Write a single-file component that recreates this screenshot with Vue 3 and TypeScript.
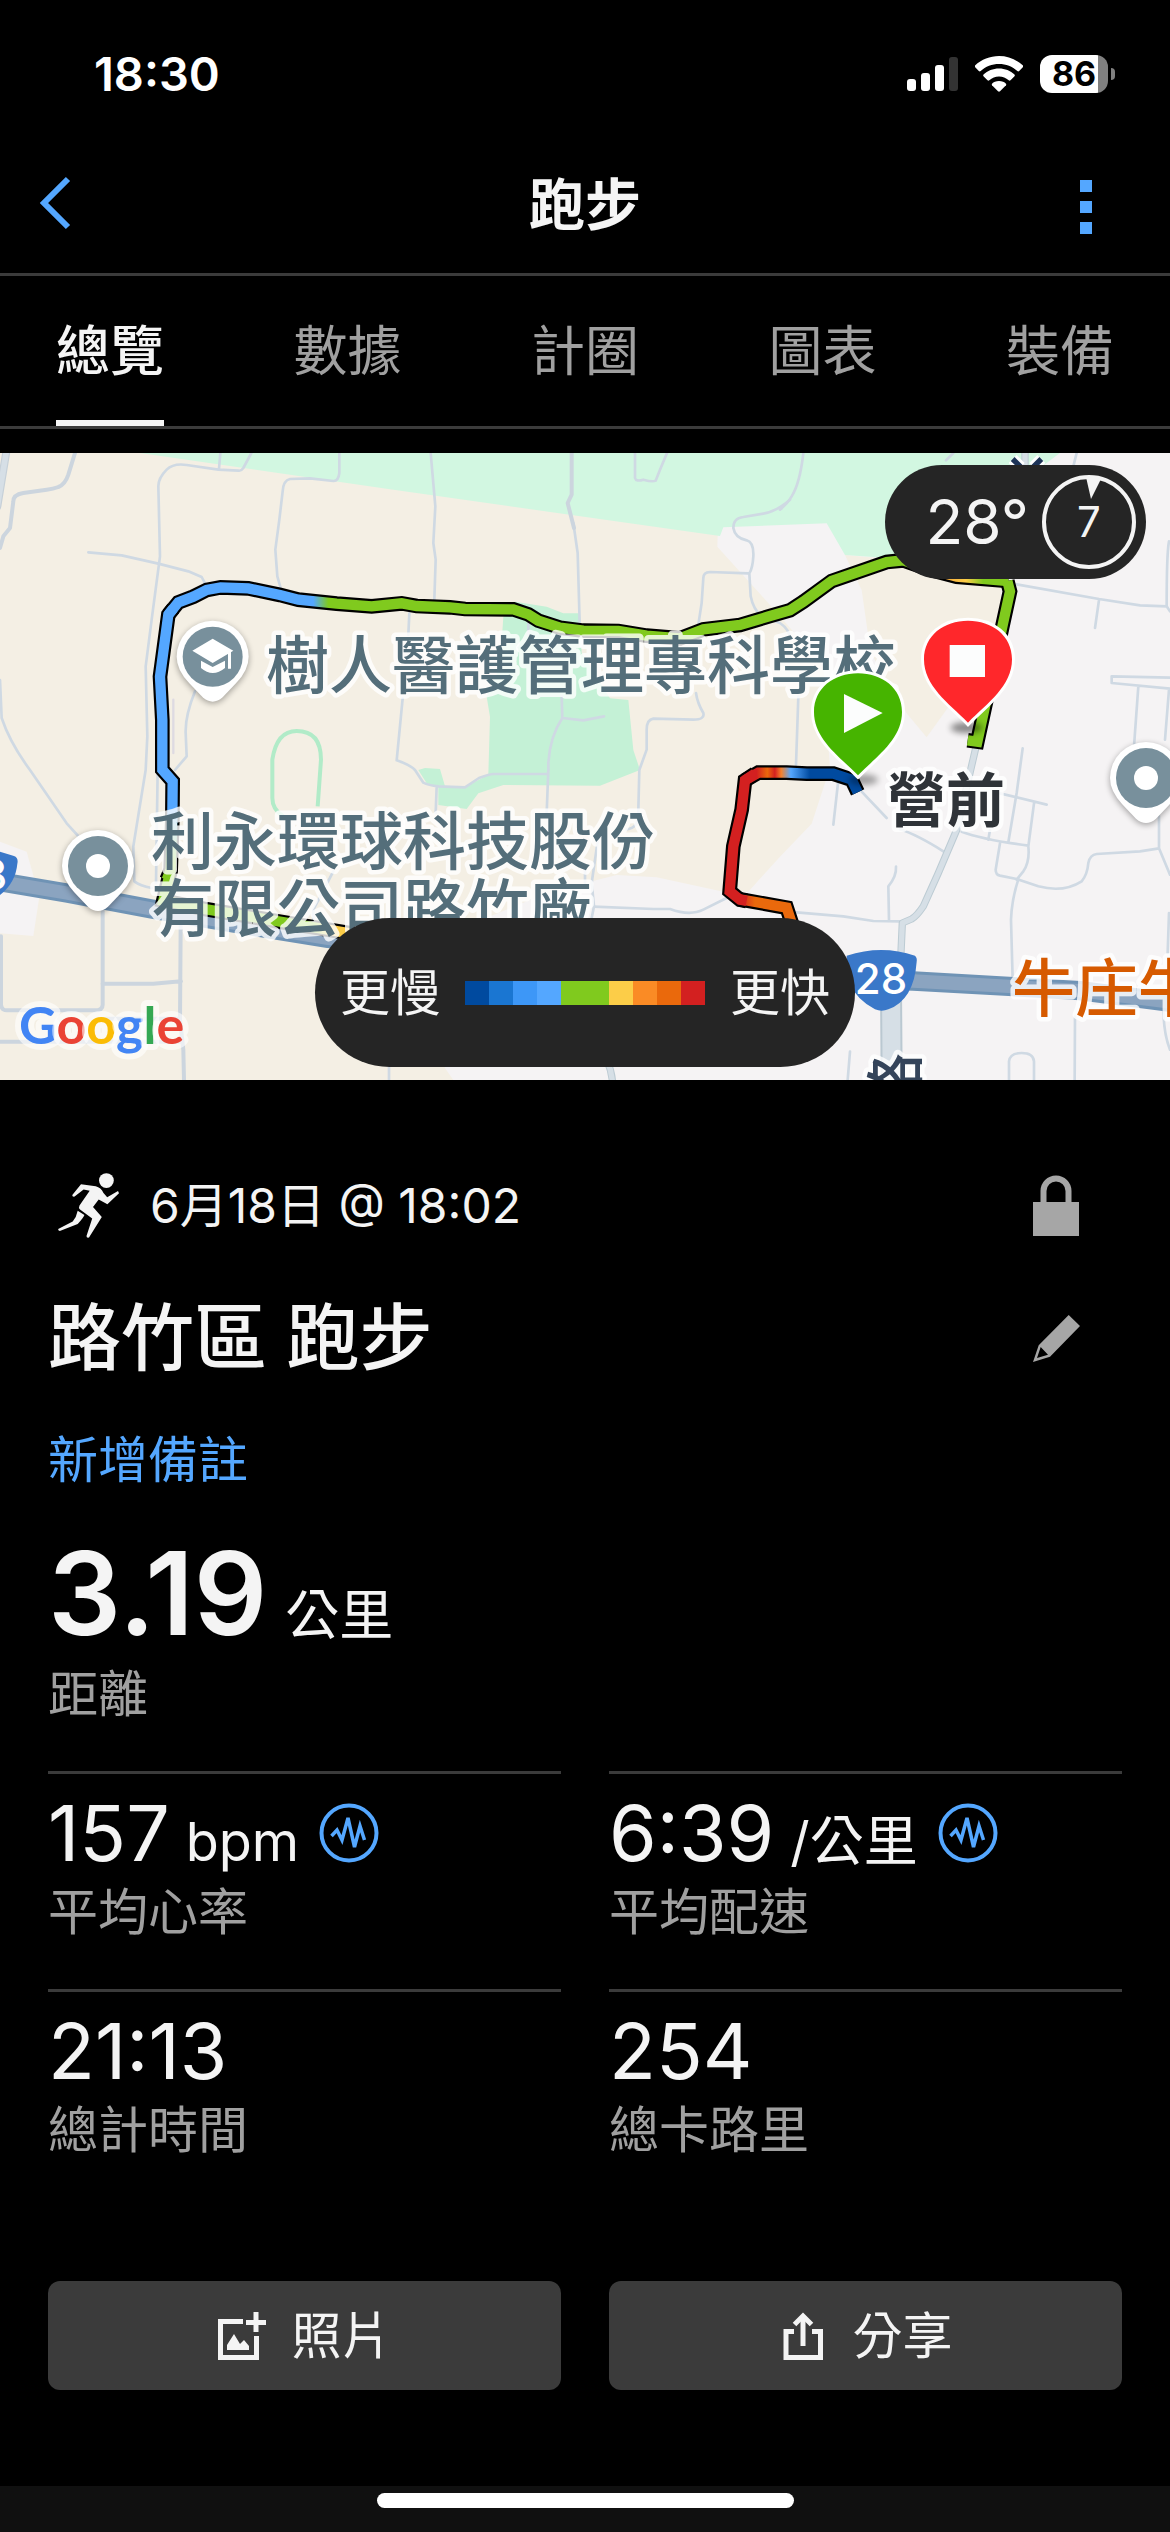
<script setup lang="ts">
import { ref } from 'vue'

interface Stat {
  value: string
  unit?: string
  label: string
  chart?: boolean
}

const tabs: string[] = ['總覽', '數據', '計圈', '圖表', '裝備']
const active = ref<string>('總覽')

const stats: Stat[] = [
  { value: '157', unit: 'bpm', label: '平均心率', chart: true },
  { value: '6:39', unit: '/公里', label: '平均配速', chart: true },
  { value: '21:13', label: '總計時間' },
  { value: '254', label: '總卡路里' },
]

const paceColors: string[] = [
  '#004a9f', '#1a76d2', '#3d97f7', '#54a7ff', '#80ca1e',
  '#80ca1e', '#fccd48', '#fa8b25', '#ea690c', '#d32020',
]

// Minor roads, in thirds of a map pixel
const roads: string[] = [
  'M0 681L5 795Q30 870 90 951L200 1111L240 1155',
  'M265 298L365 307L475 332L565 355L605 372L617 395',
  'M754 0L730 45Q723 55 715 53L655 50L560 36Q520 30 500 50Q475 75 475 100L480 310L455 500L437 640L442 850L437 951L400 1180L403 1285Q420 1298 455 1305',
  'M661 0L657 48',
  'M1018 0V60Q1015 85 1000 84L930 76L870 78Q850 82 848 115L838 200L826 290L832 370L842 405',
  'M585 715Q555 790 557 840L560 910L525 951M473 951L468 1290',
  'M1228 481L1225 545M1208 736L1190 922Q1230 935 1245 951L1270 989Q1285 997 1315 1000L1395 1003L1437 975Q1470 963 1480 963L1642 963M1310 1001L1307 1080',
  'M1292 0L1306 160L1300 270L1307 320L1303 440',
  'M1720 210L1733 300L1739 510',
  'M1645 951L1640 1080',
  'M1905 0V75Q1908 87 1930 80Q1958 88 1967 83L1980 50L2001 0',
  'M2370 140Q2330 175 2290 182L2230 192Q2200 195 2200 225Q2205 255 2240 262Q2262 268 2260 310Q2258 345 2248 361L2252 430Q2260 470 2285 490L2340 510Q2370 530 2370 560M2395 731L2388 935',
  'M2245 361L2130 357Q2110 358 2110 375L2105 450L2095 515',
  'M1585 511V545M1685 731L1687 795Q1650 850 1645 930V951M1687 795L1750 802L1812 790',
  'M2088 720Q2092 750 2110 780Q2115 800 2080 800L1960 797Q1940 800 1940 830V890L1918 951L1915 1070Q1920 1125 1880 1129',
  'M2410 0Q2400 90 2375 130Q2360 155 2340 170',
  'M2860 0L2838 22M3230 0L3220 40',
  'M3050 394L3297 438L3420 457L3500 460L3510 475M3297 441L3285 525M3507 265Q3500 300 3500 460',
  'M3510 674L3335 670V690L3510 707M3415 700L3402 880M3507 710L3495 860',
  'M3068 886L3050 1020L3025 1168',
  'M2515 981L2500 1115M2585 1016L2660 1095M2700 1129Q2750 1145 2830 1195',
  'M2885 1136Q2950 1160 3085 1178M3000 1021L3140 1055M3102 1051L3085 1180Q3090 1225 3070 1255L3050 1280',
  'M3000 1171L2987 1250Q2987 1265 3000 1268L3050 1278L3115 1300Q3190 1320 3245 1285Q3262 1265 3265 1230Q3270 1205 3290 1203L3420 1195L3477 1186L3510 1265M3477 1186V1090',
  'M3055 1279Q3035 1340 3033 1400L3038 1580M2970 1131L2965 1160',
  'M2688 1241Q2690 1270 2665 1300L2667 1400',
  'M2390 1378L2530 1390L2620 1404L2700 1405',
  'M1780 1361L1960 1368L2010 1368Q2070 1390 2110 1370L2180 1335',
  'M1795 1151L1775 1290L1782 1360L1774 1400M1755 1240V1290',
  'M2550 1796L2543 1881M3027 1881V1825Q3030 1800 3065 1800Q3100 1800 3102 1825V1881M3225 1691L3224 1881M3490 1661Q3490 1740 3510 1790M3507 1380L3503 1500',
  'M1000 1255L940 1370V1400M1167 1840V1881',
]

const wideRoads: string[] = [
  'M225 0L205 65Q195 95 175 102Q160 108 140 110L70 120Q40 125 40 145L30 225L10 250L0 285',
  'M1715 0V125L1703 150L1722 225',
  'M308 1370V1655Q308 1672 285 1672L20 1672Q5 1672 3 1655V1450',
  'M308 1592H460L543 1585M542 1420L540 1700L550 1790L552 1881M0 1766H540M320 1697H540',
]

const trackTop =
  'M505 485L535 448L580 431L620 411L662 403L745 406L840 426L895 440L1010 452L1115 460L1205 451L1250 459L1350 463L1395 468L1540 469L1585 484L1615 503L1680 524L1750 533L1855 534L1940 548L2040 556L2110 529L2220 516L2310 489L2370 472L2410 446L2495 384L2660 327L2710 322L2790 350L2870 371L3025 384'
const trackEnd = 'M3022 384L3030 415L3005 530L2932 866L2903 862'
const trackLeft = 'M500 1280L512 1251L517 1100L518 985L487 950L487 801L480 671L505 485L520 466'
const trackSouth = 'M1100 1450L1050 1441L840 1406L620 1369L490 1343L512 1251'
const trackStart = 'M2573 1018L2555 980L2500 962L2420 962L2360 959L2275 959L2235 982'
const trackFast = 'M2265 962L2235 982L2225 1070L2200 1180L2189 1315L2220 1340L2240 1344'
const trackTail = 'M2215 1338L2360 1364L2385 1440'
const trackAll: string[] = [trackTop, trackEnd, trackLeft, trackSouth, trackStart, trackFast, trackTail]
</script>

<template>
  <div class="screen">
    <div class="status">
      <span class="clock">18:30</span>
      <div class="indicators">
        <svg class="signal" viewBox="0 0 51 36" aria-hidden="true">
          <rect x="0" y="23" width="9" height="12" rx="3" fill="#fff" />
          <rect x="14" y="17" width="9" height="18" rx="3" fill="#fff" />
          <rect x="28" y="9" width="9" height="26" rx="3" fill="#fff" />
          <rect x="42" y="1" width="9" height="34" rx="3" fill="#333" />
        </svg>
        <svg class="wifi" viewBox="0 0 48 36" aria-hidden="true">
          <path fill="#fff" d="M24 0C33 0 41.500 3.500 48 9.500Q48.500 10.500 47.800 11.200L44.200 15Q43.300 15.800 42.300 15C37.500 10.500 31 8 24 8C17 8 10.500 10.500 5.700 15Q4.700 15.800 3.800 15L.2 11.200Q-.5 10.500 0 9.500C6.500 3.500 15 0 24 0Z" />
          <path fill="#fff" d="M24 12.500C30 12.500 35.500 14.800 39.500 18.500Q40.300 19.500 39.500 20.300L35.500 24.300Q34.500 25 33.700 24.300C31 22 27.700 20.500 24 20.500C20.300 20.500 17 22 14.300 24.300Q13.500 25 12.500 24.300L8.500 20.300Q7.700 19.500 8.500 18.500C12.500 14.800 18 12.500 24 12.500Z" />
          <path fill="#fff" d="M24 25C27 25 29.500 26 31 27.700Q31.500 28.500 31 29.200L25 35.300Q24 36.200 23 35.300L17 29.200Q16.500 28.500 17 27.700C18.500 26 21 25 24 25Z" />
        </svg>
        <div class="battery"><span class="level">86</span></div>
      </div>
    </div>

    <header class="nav">
      <button class="nav-btn back" aria-label="返回">
        <svg viewBox="0 0 72 72"><path d="M48 10L24 34L48 58" fill="none" stroke="#54a7ff" stroke-width="6" /></svg>
      </button>
      <h1>跑步</h1>
      <button class="nav-btn" aria-label="更多">
        <svg viewBox="0 0 72 72" fill="#54a7ff">
          <rect x="30" y="11" width="12" height="12" />
          <rect x="30" y="32" width="12" height="12" />
          <rect x="30" y="53" width="12" height="12" />
        </svg>
      </button>
    </header>

    <nav class="tabs">
      <button v-for="t in tabs" :key="t" class="tab" :class="{ on: t === active }" @click="active = t">{{ t }}</button>
    </nav>

    <section class="map">
      <svg class="canvas" viewBox="0 0 1170 627" preserveAspectRatio="xMidYMid slice">
        <defs>
          <linearGradient id="gTop" gradientUnits="userSpaceOnUse" x1="940" y1="0" x2="2980" y2="0">
            <stop offset="0" stop-color="#54a7ff" />
            <stop offset="0.022" stop-color="#80ca1e" />
            <stop offset="0.9" stop-color="#80ca1e" />
            <stop offset="0.925" stop-color="#f6a83c" />
            <stop offset="0.96" stop-color="#fccd48" />
            <stop offset="0.985" stop-color="#80ca1e" />
          </linearGradient>
          <linearGradient id="gLeft" gradientUnits="userSpaceOnUse" x1="0" y1="1080" x2="0" y2="1230">
            <stop offset="0" stop-color="#54a7ff" />
            <stop offset="1" stop-color="#80ca1e" />
          </linearGradient>
          <linearGradient id="gSouth" gradientUnits="userSpaceOnUse" x1="940" y1="0" x2="990" y2="0">
            <stop offset="0" stop-color="#80ca1e" />
            <stop offset="1" stop-color="#fccd48" />
          </linearGradient>
          <linearGradient id="gStart" gradientUnits="userSpaceOnUse" x1="2270" y1="0" x2="2430" y2="0">
            <stop offset="0" stop-color="#d32020" />
            <stop offset="0.2" stop-color="#ea690c" />
            <stop offset="0.34" stop-color="#d32020" />
            <stop offset="0.46" stop-color="#f5802a" />
            <stop offset="0.64" stop-color="#54a7ff" />
            <stop offset="1" stop-color="#004a9f" />
          </linearGradient>
          <linearGradient id="gTail" gradientUnits="userSpaceOnUse" x1="2220" y1="0" x2="2265" y2="0">
            <stop offset="0" stop-color="#d32020" />
            <stop offset="1" stop-color="#ea690c" />
          </linearGradient>
          <filter id="soft" x="-50%" y="-50%" width="200%" height="200%"><feGaussianBlur stdDeviation="9" /></filter>
          <g id="poi">
            <path d="M0-102A108 108 0 0 1 108 6Q108 46 70 86L30 128Q0 152-30 128L-70 86Q-108 46-108 6A108 108 0 0 1 0-102Z" fill="#000" opacity="0.35" filter="url(#soft)" />
            <path d="M0-108A108 108 0 0 1 108 0Q108 40 70 80L30 122Q0 148-30 122L-70 80Q-108 40-108 0A108 108 0 0 1 0-108Z" fill="#fff" />
            <circle r="90" fill="#78909c" />
          </g>
          <path id="flag" d="M0 0C-60-60-132-110-132-190C-132-262-72-306 0-306C72-306 132-262 132-190C132-110 60-60 0 0Z" />
        </defs>

        <g transform="scale(0.333333)">
          <rect width="3510" height="1881" fill="#f5f3f4" />
          <path d="M0 0H2160L2152 281L2315 461L2470 640L2490 951L2475 990L2435 1112L2340 1211L2245 1316H2170L1970 1273L1850 1266L1770 1286L1590 1341L1200 1500L1335 1845L1360 1881H0Z" fill="#f4efe4" />
          <path d="M2535 306L3010 350L2990 560L2780 853L2720 781L2612 600L2585 411Z" fill="#f4efe4" />
          <path d="M0 1166L80 1196L118 1331L100 1449L0 1441Z" fill="#f5f3f4" />
          <path d="M420 0L1170 109L2160 249L2170 223L2480 211L2535 306L2800 325L3100 60L3180 0Z" fill="#d2f7e1" />
          <path d="M1510 491L1545 446L1640 461L1690 481H1740L1745 600L1830 736L1885 741L1900 891L1920 951L1800 998L1510 996L1435 1021L1400 1068L1315 1056V1001L1280 991L1255 951L1275 945L1320 948L1335 1000H1400L1465 965L1470 791L1460 731L1500 640Z" fill="#c4f1d6" />
          <path d="M850 1090Q817 1070 817 1035V920Q830 834 890 834Q963 834 963 920L953 1060" fill="none" stroke="#b1ebc8" stroke-width="12" />

          <g fill="none" stroke-linejoin="round" stroke-linecap="round">
            <path v-for="(d, i) in roads" :key="'r' + i" :d="d" stroke="#cfd9e3" stroke-width="8" />
            <path v-for="(d, i) in wideRoads" :key="'w' + i" :d="d" stroke="#ccd5de" stroke-width="12" />
            <path d="M520 740V900" stroke="#dedae2" stroke-width="7" />
            <path d="M20-10L-8 160" stroke="#c6d0d8" stroke-width="24" />
            <path d="M20-10L-8 160" stroke="#d6dfe6" stroke-width="17" />
            <path d="M2927 886L2870 1131L2815 1260L2770 1360Q2750 1390 2735 1398L2707 1410L2702 1520M1820 1820Q1838 1860 1838 1900M3075 0V40" stroke="#bccbd3" stroke-width="22" />
            <path d="M2927 886L2870 1131L2815 1260L2770 1360Q2750 1390 2735 1398L2707 1410L2702 1520M1820 1820Q1838 1860 1838 1900M3075 0V40" stroke="#d6dfe6" stroke-width="16" />
            <path d="M2673 1600L2675 1881" stroke="#bac8d1" stroke-width="66" />
            <path d="M2673 1600L2675 1881" stroke="#d6dfe6" stroke-width="54" />
            <path d="M-20 1283L200 1320L455 1368L700 1410L985 1456L2000 1560L2740 1584L3040 1601L3240 1613L3530 1650" stroke="#6f93b5" stroke-width="58" />
            <path d="M-20 1283L200 1320L455 1368L700 1410L985 1456L2000 1560L2740 1584L3040 1601L3240 1613L3530 1650" stroke="#8ba4c0" stroke-width="40" />
          </g>

          <g fill="none" stroke-linejoin="miter">
            <path v-for="(d, i) in trackAll" :key="'t' + i" :d="d" stroke="#000" stroke-width="44" />
            <path :d="trackSouth" stroke="url(#gSouth)" stroke-width="31" />
            <path :d="trackLeft" stroke="url(#gLeft)" stroke-width="31" />
            <path :d="trackTop" stroke="url(#gTop)" stroke-width="31" />
            <path :d="trackEnd" stroke="#80ca1e" stroke-width="31" />
            <path :d="trackTail" stroke="url(#gTail)" stroke-width="31" />
            <path :d="trackStart" stroke="url(#gStart)" stroke-width="31" />
            <path :d="trackFast" stroke="#d32020" stroke-width="31" />
          </g>

          <path d="M3038 18L3062 42M3124 18L3100 42" stroke="#fff" stroke-width="34" />
          <path d="M3038 18L3062 42M3124 18L3100 42" stroke="#1d3357" stroke-width="16" />
          <path d="M-20 1190L42 1209Q56 1214 52 1232Q45 1310-40 1350Z" fill="#3a78c9" />
          <path d="M2540 1520V1508Q2645 1474 2745 1508Q2752 1514 2750 1526Q2742 1640 2665 1669Q2645 1677 2625 1669Q2570 1640 2548 1590Z" fill="#3a78c9" />
        </g>

        <text class="poi-name" x="266" y="235">樹人醫護管理專科學校</text>
        <text class="poi-name" x="151" y="411">利永環球科技股份</text>
        <text class="poi-name" x="151" y="478">有限公司路竹廠</text>
        <text class="town" x="887" y="369">營前</text>
        <text class="food" x="1012" y="558">牛庄牛</text>
        <text class="street" text-anchor="end" transform="translate(917 600) rotate(-90)">路</text>
        <text class="shield" x="881" y="541">28</text>
        <text class="shield" x="-19" y="437">28</text>
        <text class="brand" x="19" y="591"><tspan fill="#4285f4">G</tspan><tspan fill="#ea4335">o</tspan><tspan fill="#fbbc05">o</tspan><tspan fill="#4285f4">g</tspan><tspan fill="#34a853">l</tspan><tspan fill="#ea4335">e</tspan></text>

        <g transform="scale(0.333333)">
          <g transform="translate(638 611)">
            <use href="#poi" />
            <path d="M-61-18L0-54L62-18L0 19ZM46-18H55V36H46ZM-35 12L0 31L37 12V34Q0 64-35 34Z" fill="#fff" />
          </g>
          <g transform="translate(294 1239)"><use href="#poi" /><circle r="36" fill="#fff" /></g>
          <g transform="translate(3438 975)"><use href="#poi" /><circle r="36" fill="#fff" /></g>
          <ellipse cx="2900" cy="824" rx="48" ry="16" opacity="0.45" filter="url(#soft)" />
          <ellipse cx="2590" cy="980" rx="44" ry="16" opacity="0.35" filter="url(#soft)" />
          <g transform="translate(2904 809)">
            <use href="#flag" fill="#ff272b" stroke="#fff" stroke-width="18" paint-order="stroke" />
            <rect x="-55" y="-233" width="106" height="96" fill="#fcfdfd" />
          </g>
          <g transform="translate(2574 967)">
            <use href="#flag" fill="#46b400" stroke="#fff" stroke-width="18" paint-order="stroke" />
            <path d="M-42-244L74-187L-42-127Z" fill="#fcfdfd" />
          </g>
        </g>
      </svg>

      <div class="weather">
        <span>28°</span>
        <div class="wind">
          <svg viewBox="0 0 96 96" aria-hidden="true">
            <circle cx="48" cy="48" r="45" fill="none" stroke="#f4f4f4" stroke-width="4" />
            <path d="M45 3L60 5L50 25Z" fill="#f4f4f4" />
          </svg>
          <span>7</span>
        </div>
      </div>

      <div class="legend">
        <span>更慢</span>
        <div class="scale"><i v-for="(c, i) in paceColors" :key="i" :style="{ background: c }"></i></div>
        <span>更快</span>
      </div>
    </section>

    <main>
      <div class="row">
        <svg class="icon" viewBox="0 0 72 72" fill="#f4f4f4" aria-hidden="true">
          <circle cx="58.400" cy="10.600" r="7.400" />
          <path d="M33 14.200L47.700 16.200Q53 17.500 55.500 23L59.200 27.300L70 21L71 23.300L59.400 34.200L50.700 29.500L45 37.100L53.800 47L41 67.600Q38.500 68.300 38.500 66L44.200 48.500L32 39.500Q30.300 37.500 31.500 35.500L41.700 20.800L35.600 19.500L26.600 26.600Q24 27 24.300 25Z" />
          <path d="M29.700 40.700L36.400 45Q36 47 29.700 54L11.800 60.900Q9.800 60.500 10.200 58.900L24.700 51.500Q28.500 47 29.700 40.700Z" />
        </svg>
        <time class="date">6月18日 @ 18:02</time>
        <button class="icon-btn" aria-label="隱私">
          <svg viewBox="0 0 72 72">
            <rect x="13" y="32" width="46" height="34" fill="#a6a6a6" />
            <path d="M23.500 34V21A12.500 12.500 0 0 1 48.500 21V34" fill="none" stroke="#a6a6a6" stroke-width="6" />
          </svg>
        </button>
      </div>

      <div class="row title-row">
        <h2>路竹區 跑步</h2>
        <button class="icon-btn" aria-label="編輯">
          <svg viewBox="0 0 72 72" fill="#a6a6a6">
            <path fill-rule="evenodd" d="M48.700 13L60 24L30 54.700L13 60L18.700 43.300ZM20.700 45L17 56L28 52.700Z" />
          </svg>
        </button>
      </div>

      <a class="note" href="#note">新增備註</a>

      <div class="distance"><strong>3.19</strong><span>公里</span></div>
      <div class="label distance-label">距離</div>

      <div class="stats">
        <div v-for="s in stats" :key="s.label" class="stat">
          <div class="value">
            <div class="figure"><b>{{ s.value }}</b><span v-if="s.unit">{{ s.unit }}</span></div>
            <svg v-if="s.chart" viewBox="0 0 60 60" fill="none" stroke="#54a7ff" aria-hidden="true">
              <circle cx="30" cy="30" r="27.500" stroke-width="4" />
              <path d="M12.500 33L18 27L23 37L29 15L35.500 44L41 23L45.500 37" stroke-width="3.500" />
            </svg>
          </div>
          <div class="label">{{ s.label }}</div>
        </div>
      </div>

      <div class="actions">
        <button>
          <svg viewBox="0 0 48 48" aria-hidden="true">
            <path d="M25 9.500H2.500V45.500H38.500V24" fill="none" stroke="#f4f4f4" stroke-width="5" />
            <path d="M38 0V20M28 10.500H48" stroke="#f4f4f4" stroke-width="5" />
            <path d="M9 38V33L16 22L22 32L26 28L31 34V38Z" fill="#f4f4f4" />
          </svg>
          <span>照片</span>
        </button>
        <button>
          <svg viewBox="0 0 48 48" fill="none" stroke="#f4f4f4" stroke-width="5" aria-hidden="true">
            <path d="M15 19.500H7V45.500H41.500V19.500H33" />
            <path d="M24 4V34" />
            <path d="M15.500 12.500L24 4L32.500 12.500" />
          </svg>
          <span>分享</span>
        </button>
      </div>
    </main>

    <footer class="home"><span></span></footer>
  </div>
</template>

<style>
body {
  background: #000;
}
</style>

<style scoped>
.screen {
  min-height: 100vh;
  display: flex;
  flex-direction: column;
  background: #000;
  color: #f4f4f4;
  font-family: "Inter", "Noto Sans CJK TC", sans-serif;
  font-size: 50px;
  line-height: 62px;
}
button {
  border: 0;
  padding: 0;
  background: none;
  color: inherit;
  font: inherit;
  cursor: pointer;
}
svg {
  display: block;
}
.status {
  display: flex;
  justify-content: space-between;
  align-items: center;
  height: 126px;
  padding: 11px 55px 0 94px;
}
.clock {
  color: #fff;
  font-size: 47px;
  font-weight: 600;
}
.indicators {
  display: flex;
  align-items: center;
  gap: 17px;
}
.signal {
  width: 51px;
  height: 36px;
}
.wifi {
  width: 48px;
  height: 36px;
}
.battery {
  display: flex;
  align-items: center;
  gap: 3px;
}
.battery .level {
  width: 68px;
  height: 38px;
  border-radius: 12px;
  background: linear-gradient(to right, #fff 58px, #808080 58px);
  color: #000;
  font-size: 34px;
  font-weight: 700;
  line-height: 38px;
  text-align: center;
}
.battery::after {
  content: "";
  width: 4px;
  height: 12px;
  border-radius: 0 4px 4px 0;
  background: #808080;
}
.nav {
  display: flex;
  justify-content: space-between;
  align-items: center;
  height: 136px;
  padding: 0 48px 0 20px;
  border-bottom: 3px solid #3b3b3b;
}
.nav-btn {
  width: 72px;
  height: 72px;
}
.back {
  margin-right: 28px;
}
.nav h1 {
  margin: 0;
  font-size: 56px;
  font-weight: 600;
}
.tabs {
  display: flex;
  justify-content: space-between;
  padding: 0 56px;
  border-bottom: 3px solid #3b3b3b;
}
.tab {
  height: 150px;
  padding-top: 2px;
  border-top: 6px solid transparent;
  border-bottom: 6px solid transparent;
  color: #a0a0a0;
  font-size: 54px;
}
.tab.on {
  border-bottom-color: #f4f4f4;
  color: #f4f4f4;
  font-weight: 500;
}
.map {
  position: relative;
  margin-top: 24px;
}
.canvas {
  width: 100%;
}
.canvas text {
  paint-order: stroke;
  stroke-linejoin: round;
}
.poi-name,
.food,
.town,
.street {
  font-size: 63px;
  font-weight: 500;
  stroke: rgba(255, 255, 255, 0.8);
  stroke-width: 9px;
}
.poi-name {
  fill: #546e7a;
}
.food {
  fill: #d65a00;
}
.town {
  font-size: 59px;
  font-weight: 700;
  fill: #2f3338;
}
.street {
  font-size: 59px;
  fill: #34445a;
}
.shield {
  font-size: 42px;
  font-weight: 500;
  fill: #fff;
  text-anchor: middle;
}
.brand {
  font-family: "Lato", sans-serif;
  font-size: 52px;
  font-weight: 700;
  stroke: rgba(255, 255, 255, 0.6);
  stroke-width: 12px;
}
.weather {
  position: absolute;
  top: 12px;
  right: 24px;
  display: flex;
  align-items: center;
  gap: 12px;
  height: 114px;
  padding: 0 9px 0 40px;
  border-radius: 57px;
  background: #252525;
  font-size: 62px;
}
.wind {
  display: grid;
  place-items: center;
  width: 96px;
  height: 96px;
  font-size: 42px;
}
.wind > * {
  grid-area: 1 / 1;
}
.wind svg {
  width: 96px;
}
.legend {
  position: absolute;
  left: 50%;
  bottom: 13px;
  transform: translateX(-50%);
  display: flex;
  align-items: center;
  gap: 25px;
  height: 149px;
  padding: 0 25px;
  border-radius: 75px;
  background: #252525;
  white-space: nowrap;
}
.scale {
  display: flex;
}
.scale i {
  width: 24px;
  height: 24px;
}
main {
  padding: 90px 48px 0;
}
.row {
  display: flex;
  align-items: center;
  height: 72px;
}
.icon {
  width: 72px;
  height: 72px;
  margin-right: 30px;
}
.icon-btn {
  width: 72px;
  height: 72px;
  margin: 0 30px 0 auto;
}
.date {
  font-size: 48px;
}
.title-row {
  margin-top: 60px;
}
.title-row h2 {
  margin: 0;
  font-size: 73px;
  font-weight: 500;
}
.note {
  display: block;
  width: max-content;
  margin-top: 55px;
  color: #54a7ff;
  text-decoration: none;
}
.distance {
  display: flex;
  align-items: baseline;
  gap: 18px;
  margin-top: 43px;
}
.distance strong {
  font-size: 115px;
  font-weight: 600;
  line-height: 120px;
}
.distance span {
  font-size: 54px;
}
.label {
  color: #a0a0a0;
}
.distance-label {
  margin-top: 9px;
}
.stats {
  display: grid;
  grid-template-columns: 1fr 1fr;
  column-gap: 48px;
  margin-top: 46px;
}
.stat {
  padding: 19px 0 46px;
  border-top: 3px solid #3b3b3b;
}
.value {
  display: flex;
  align-items: center;
  gap: 20px;
  height: 80px;
  margin-bottom: 8px;
}
.figure {
  display: flex;
  align-items: baseline;
  gap: 16px;
}
.figure b {
  font-size: 77px;
  font-weight: 400;
  line-height: 80px;
}
.figure span {
  font-size: 54px;
}
.value svg {
  width: 60px;
  height: 60px;
}
.actions {
  display: grid;
  grid-template-columns: 1fr 1fr;
  column-gap: 48px;
  margin-top: 74px;
}
.actions button {
  display: flex;
  justify-content: center;
  align-items: center;
  gap: 26px;
  height: 109px;
  border-radius: 12px;
  background: #3b3b3b;
}
.actions svg {
  width: 48px;
  height: 48px;
}
.home {
  display: flex;
  justify-content: center;
  height: 39px;
  margin-top: auto;
  padding-top: 7px;
  background: #101010;
}
.home span {
  width: 417px;
  height: 15px;
  border-radius: 8px;
  background: #fff;
}
</style>
